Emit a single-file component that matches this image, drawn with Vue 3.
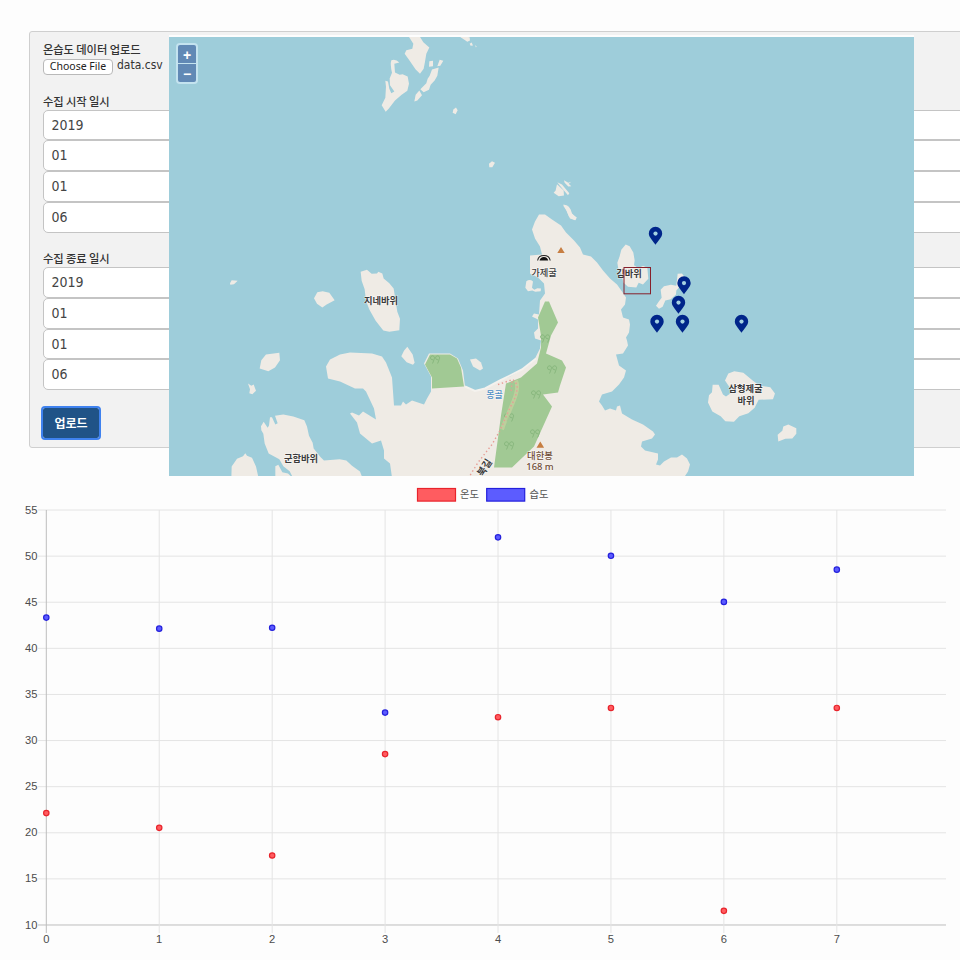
<script setup>
const groups = [
  { label: '수집 시작 일시', values: ['2019', '01', '01', '06'] },
  { label: '수집 종료 일시', values: ['2019', '01', '01', '06'] },
]

const pins = [
  [655.5, 244.3],
  [684, 293.8],
  [678.5, 313.3],
  [657, 332.3],
  [682.5, 332.3],
  [741.5, 332.3],
]

const trees = [[435, 360], [545, 339], [552, 370], [536, 395], [509, 418], [535, 434], [509, 446]]

const temperature = [22.1, 20.5, 17.5, 28.5, 32.5, 33.5, 11.5, 33.5]
const humidity = [43.3, 42.1, 42.2, 33, 52, 50, 45, 48.5]
const yTicks = [55, 50, 45, 40, 35, 30, 25, 20, 15, 10]
const px = (i) => 46.3 + i * 112.93
const py = (v) => 34 + (55 - v) * 9.222
</script>

<template>
  <main class="page">
    <form class="panel" @submit.prevent>
      <div class="upload">
        <div class="label">온습도 데이터 업로드</div>
        <div class="file-row">
          <button type="button" class="choose">Choose File</button>
          <span class="file-name">data.csv</span>
        </div>
      </div>
      <div v-for="g in groups" :key="g.label" class="group">
        <div class="label">{{ g.label }}</div>
        <div v-for="(v, i) in g.values" :key="i" class="field">{{ v }}</div>
      </div>
      <button type="submit" class="submit">업로드</button>
    </form>

    <section class="map">
      <svg class="map-canvas" viewBox="169 36.5 745 439.5" width="745" height="439.5">
        <g class="land">
          <path d="M539 214L545 214L552 219L561 225L566 232L574 240L580 247L583 254L591 256L597 262L603 270L610 278L617 284L622 291L626 297L625 304L621 309L623 317L629 319L630 324L629 332L626 337L627 340L628 345L623 353L616 354L619 365L626 370L624 377L619 384L612 391L602 394L599 401L602 405L605 410L610 408L616 410L617 406L620 405L622 413L632 419L643 424L653 431L655 434L652 438L642 441L641 446L645 450L658 453L658 459L656 464L660 465L664 461L671 457L677 457L682 454L687 458L690 464L688 471L684 477L392 477L390 463L384 458L384 450L381 440L372 443L360 433L357 422L350 413L352 412L359 415L363 411L376 419L374 408L366 391L363 388L355 388L340 381L328 378L326 366L330 359L340 354L350 352L372 353L382 356L386 362L392 377L394 405L401 405L403 401L406 404L412 400L424 404L427 398L431 391L431 376L424 363L429 353L450 353L458 358L463 370L465 386L475 390L485 388L500 380L510 376L524 368L534 360L540 348L541 340L535 338L534 332L538 328L538 319L532 316L534 313L539 314L540 300L545 293L544 283L538 277L530 273L530 255L542 254L540 246L535 238L532 229L535 221Z" />
          <g transform="translate(360 30) scale(.3333)">
            <path d="M145 16L178 16L190 35L208 51L199 70L195 94L191 115L180 130L167 117L149 91L134 70L139 59L157 55L160 40Z" />
            <path d="M94 89Q107 84 118 96L103 100L105 126L119 133L128 131L143 138L147 160L142 181L125 193L105 210L86 235L77 244L65 224L76 202L78 169L76 151L84 153L88 175L94 188L103 183L90 164L89 144L96 127Q90 101 94 89Z" />
            <path d="M208 92L219 91L219 107L207 109ZM239 88L250 91L241 106L232 107ZM216 117L236 111L232 136L224 150L212 163L207 178L191 185L181 176L199 158L203 145L209 136ZM178 180L186 194L172 210L163 213L167 193Z" />
            <path d="M297 17L329 20L330 30L322 34ZM329 40L335 36L339 45L332 46ZM345 44L350 47L348 51ZM280 237L288 231L293 239L287 251L278 247ZM387 400L396 392L405 397L397 410L388 410Z" />
            <path d="M591 461L611 480L612 495L596 497L581 487L587 480ZM592 455L606 462L628 488L624 494L600 466ZM612 449L625 457L634 454L626 460L634 467L625 468L614 457ZM609 524L626 528L632 537L636 549L650 562L646 569L630 564L620 541Z" />
          </g>
          <g transform="translate(220 250) scale(.3333)">
            <path d="M30 98L35 89L53 91L42 101L31 103ZM282 143L292 125L308 122L328 127L344 149L320 162L307 171L291 160ZM422 64L441 58L455 70L471 69L475 64L487 69L491 84L508 98L521 114L527 152L532 184L540 205L538 239L508 244L490 240L467 211L448 177L438 151L434 116L425 91ZM562 289L578 312L584 337L579 343L560 335L544 317L552 301ZM124 329L138 312L178 307L180 329L165 351L145 362L119 354ZM84 399L94 406L101 402L108 421L97 431L88 428L90 416Z" />
            <path d="M123 527L131 514L143 532L147 525L150 500L156 500L166 522L173 518L165 496L190 492L220 498L253 509L261 528L267 556L278 577L281 594L302 620L312 630L359 626L379 630L396 646L420 663L428 684L220 684L209 662L190 647L178 626L146 609L134 579L130 550L124 539ZM34 684L35 648L51 625L69 617L76 608L81 616L96 622L108 648L116 684ZM166 684L166 647L175 643L187 665L204 669L220 684Z" />
          </g>
          <g transform="translate(500 200) scale(.3333)">
            <path d="M190 12L202 15L210 31L218 43L230 51L225 59L207 49L198 27ZM79 242Q90 235 99 243L96 262L103 268L112 263L123 264L122 272L106 274L97 270L84 272L76 262ZM377 132L389 137L400 156L404 180L402 194L416 203L429 196L442 202L445 235L429 252L416 247L409 261L384 259L370 246L365 222L355 205L352 187L359 167L364 148ZM482 268L492 257L513 253L529 256L533 220L546 219L553 229L542 255L529 270L528 282L512 296L496 300L488 319L477 325L468 316L476 304L485 292Z" />
          </g>
          <g transform="translate(560 320) scale(.3333)">
            <path d="M495 180L505 159L523 152L550 157L578 180L598 195L631 200L645 219L639 236L596 238L584 262L565 278L538 287L522 304L496 302L482 287L457 273L444 246L447 224L456 215L458 193L476 193L489 222L498 228L512 218L514 208ZM653 343L667 331L670 318L685 312L709 323L709 340L697 354L676 355L655 363Z" />
          </g>
          <path d="M470 359L476 358L481 362L483 368L480 370L473 366Z" />
        </g>
        <g class="forest">
          <path d="M430 354L450 354L457 358L461 367L464 386L432 388L432 377L425 364Z" />
          <path d="M545 301L549 301L558 322L551 335L546 353L562 360L566 367L560 385L558 392L543 394L552 406L534 446L512 467L494 467L501 415L506 383L521 377L537 363L541 347L541 335L538 317Z" />
        </g>
        <path class="beach" d="M465 386L475 390.5L485 388L500 380L522 369L536 358" />
        <g class="tree">
          <path v-for="(t, i) in trees" :key="i" :transform="`translate(${t[0]} ${t[1]})`" d="M-4.5 -2.5a2 2 0 1 1 3.6 1q-.4 2-1.6 4.5M.6 -2.5a2 2 0 1 1 3.6 1q-.4 2-1.6 4.5M-4.5 -2.5q.2 2 2.5 1.8M.6 -2.5q.2 2 2.5 1.8" />
        </g>
        <path class="trail-glow" d="M516 380C521 391 509 408 502 429" />
        <path class="trail" d="M498 384L513 379L517 384Q518 394 510 407L500 430L492 444L478 462L470 475" />
        <path class="trail" d="M512 381L511 392" />
        <path class="peak" d="M561 246.5l3.7 6h-7.4zM540.3 441l3.8 6.3h-7.6z" />
        <path class="cave-arc" d="M537.6 260a6.4 6 0 0 1 12.6 0" />
        <path class="cave" d="M539.6 260c.2-2 2-3.6 4.3-3.6s4 1.6 4.3 3.6z" />
        <g class="place">
          <text x="381" y="303.7">지네바위</text>
          <text x="301" y="461.5">군함바위</text>
          <text x="629" y="276.3">김바위</text>
          <text x="745.5" y="391.2">삼형제굴</text>
          <text x="746" y="403.2">바위</text>
          <text class="thin" x="544" y="275.3">가제굴</text>
          <text class="water" x="494.5" y="397.5">몽골</text>
          <text class="summit" x="540" y="458">대한봉</text>
          <text class="summit" x="540" y="469.3">168 m</text>
          <text class="road" transform="translate(487.5 469) rotate(-57)">북길</text>
        </g>
        <rect class="selection" x="624" y="267" width="26.5" height="26.3" />
        <g v-for="(p, i) in pins" :key="i" :transform="`translate(${p[0]} ${p[1]})`">
          <path class="pin" d="M0 0C-2-3.6-6.7-7.5-6.7-11.4a6.7 6.7 0 0 1 13.4 0C6.7-7.5 2-3.6 0 0z" />
          <circle class="pin-hole" cx="0" cy="-11.2" r="2.1" />
        </g>
      </svg>
      <div class="zoom">
        <button type="button">+</button>
        <button type="button">−</button>
      </div>
    </section>

    <svg class="chart" width="960" height="484" viewBox="0 0 960 484">
      <rect class="temp-box" x="417.5" y="12.5" width="38" height="12.6" />
      <text class="legend" x="460" y="22.3">온도</text>
      <rect class="hum-box" x="486.7" y="12.5" width="38" height="12.6" />
      <text class="legend" x="529.5" y="22.3">습도</text>
      <g v-for="t in yTicks" :key="t">
        <line :class="t === 10 ? 'axis' : 'grid'" x1="38" x2="946" :y1="py(t)" :y2="py(t)" />
        <text class="tick end" x="37.5" :y="py(t) + 3.6">{{ t }}</text>
      </g>
      <g v-for="(v, i) in temperature" :key="i">
        <line :class="i === 0 ? 'axis' : 'grid'" :x1="px(i)" :x2="px(i)" y1="34" y2="457" />
        <text class="tick mid" :x="px(i)" y="467">{{ i }}</text>
      </g>
      <circle v-for="(v, i) in temperature" :key="'t' + i" class="temp" :cx="px(i)" :cy="py(v) - .3" r="2.7" />
      <circle v-for="(v, i) in humidity" :key="'h' + i" class="hum" :cx="px(i)" :cy="py(v) - .3" r="2.7" />
    </svg>
  </main>
</template>

<style>
body { margin: 0; background: #fdfdfd; }
</style>

<style scoped>
.page {
  position: relative;
  box-sizing: border-box;
  width: 960px;
  height: 960px;
  padding-top: 31px;
  overflow: hidden;
  background: #fdfdfd;
  color: #333;
  font-family: "DejaVu Sans Condensed", "Noto Sans CJK KR", sans-serif;
}
.panel {
  box-sizing: border-box;
  height: 417px;
  margin: 0 -20px 28px 29px;
  padding: 8.5px 0 0 13px;
  border: 1px solid #cfcfcf;
  border-radius: 3px;
  background: #f2f2f2;
}
.label {
  height: 17px;
  font: 500 11.3px/17px "Noto Sans CJK KR", sans-serif;
  letter-spacing: -.1px;
  white-space: nowrap;
}
.upload { height: 51px; }
.file-row { display: flex; align-items: center; gap: 4px; height: 18px; }
.choose {
  box-sizing: border-box;
  width: 70px;
  height: 16px;
  padding: 0;
  border: 1px solid #b9b9b9;
  border-radius: 4px;
  background: #fff;
  color: #222;
  font: 10.5px/13px "Noto Sans", sans-serif;
}
.file-name {
  margin-top: -3px;
  font-family: "DejaVu Sans", sans-serif;
  font-stretch: condensed;
  font-size: 12px;
  line-height: 14px;
}
.group { height: 157.5px; }
.group .label { height: 18px; line-height: 18px; }
.field {
  box-sizing: border-box;
  height: 30.8px;
  padding-left: 7.5px;
  border: 1.5px solid #c4c4c4;
  border-radius: 5px;
  background: #fff;
  color: #444;
  font-family: "DejaVu Sans", sans-serif;
  font-stretch: condensed;
  font-size: 14px;
  line-height: 28px;
}
.submit {
  display: block;
  width: 56px;
  height: 30px;
  margin: 1px 0 0 0;
  padding: 0;
  border: 0;
  border-radius: 2px;
  outline: 2px solid #3f82ef;
  background: #205387;
  color: #fff;
  font: bold 12px/29px "Noto Sans CJK KR", sans-serif;
}
.map {
  position: absolute;
  left: 169px;
  top: 35px;
  box-sizing: border-box;
  width: 745px;
  height: 441px;
  padding-top: 1.5px;
  background: #fdfdfd;
}
.map-canvas { display: block; background: #9ecdda; }
.zoom {
  position: absolute;
  left: 7px;
  top: 7.5px;
  display: flex;
  flex-direction: column;
  gap: 1px;
  padding: 2px;
  border-radius: 4px;
  background: #c4e3ef;
}
.zoom button {
  width: 18px;
  height: 18px;
  padding: 0;
  border: 0;
  background: #6189b5;
  color: #fff;
  font: bold 14px/20px "Liberation Sans", sans-serif;
}
.zoom button:first-child { border-radius: 2px 2px 0 0; }
.zoom button:last-child { border-radius: 0 0 2px 2px; }
.land { fill: #efebe5; }
.forest { fill: #a1c994; }
.beach { fill: none; stroke: #f4f2ee; stroke-width: 2; }
.tree { fill: none; stroke: #84b47b; stroke-width: .9; }
.trail { fill: none; stroke: #e79c94; stroke-width: 1.4; stroke-dasharray: 1.4 2.6; }
.trail-glow { fill: none; stroke: #c8d19f; stroke-width: 4; opacity: .7; }
.peak { fill: #c77e42; }
.cave { fill: #111; }
.cave-arc { fill: none; stroke: #222; stroke-width: 1.1; }
.place {
  fill: #3a3a3a;
  font: bold 9.3px "Noto Sans CJK KR", sans-serif;
  text-anchor: middle;
  paint-order: stroke;
  stroke: rgba(255, 255, 255, .6);
  stroke-width: 1.2px;
}
.place .thin { font-weight: 500; }
.place .road { font-size: 10px; }
.place .water { fill: #4f8fc4; font-weight: 500; font-size: 9px; }
.place .summit { fill: #6f4c36; font: 500 9.4px "Noto Sans", "Noto Sans CJK KR", sans-serif; }
.selection { fill: none; stroke: #87202b; stroke-width: 1; }
.pin { fill: #00258a; }
.pin-hole { fill: #a5d2e2; }
.chart { display: block; font-family: "Liberation Sans", "Noto Sans CJK KR", sans-serif; }
.legend { fill: #555; font-size: 10.3px; }
.tick { fill: #4c4c4c; font-size: 11.2px; }
.end { text-anchor: end; }
.mid { text-anchor: middle; }
.grid { stroke: #e4e4e4; stroke-width: 1; }
.axis { stroke: #bdbdbd; stroke-width: 1; }
.temp, .temp-box { fill: #ff5c60; stroke: #e8242c; stroke-width: 1.2; }
.hum, .hum-box { fill: #5c5cff; stroke: #2420dc; stroke-width: 1.2; }
</style>
